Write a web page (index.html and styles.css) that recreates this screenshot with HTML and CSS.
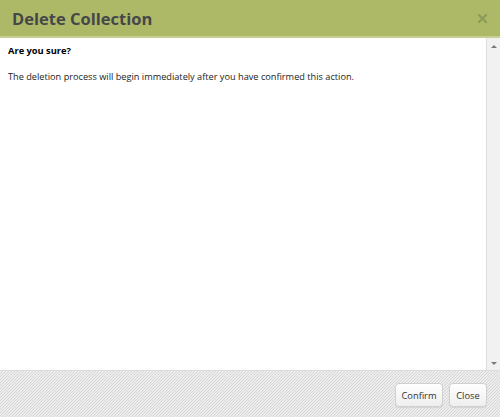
FILE: index.html
```html
<!DOCTYPE html>
<html>
<head>
<meta charset="utf-8">
<link rel="stylesheet" href="styles.css">
</head>
<body>
<div class="dialog">
  <div class="titlebar">
    <span class="title">Delete Collection</span>
    <span class="close-x" aria-label="close">
      <svg width="9" height="9" viewBox="0 0 9 9"><path d="M1 1L8 8M8 1L1 8" stroke="#8b9b5c" stroke-width="2.2" stroke-linecap="square"/></svg>
    </span>
  </div>
  <div class="content-wrap">
    <div class="content">
      <p class="question">Are you sure?</p>
      <p class="message">The deletion process will begin immediately after you have confirmed this action.</p>
    </div>
    <div class="scrollbar">
      <span class="arrow up"></span>
      <span class="arrow down"></span>
    </div>
  </div>
  <div class="buttonbar">
    <button class="btn btn-confirm">Confirm</button>
    <button class="btn btn-close">Close</button>
  </div>
</div>
</body>
</html>
```
FILE: styles.css
```css
html, body {
  margin: 0;
  padding: 0;
  width: 500px;
  height: 417px;
  overflow: hidden;
}
body {
  font-family: "Open Sans", "DejaVu Sans", sans-serif;
  color: #222;
}
.dialog {
  display: flex;
  flex-direction: column;
  width: 500px;
  height: 417px;
}
.titlebar {
  height: 36px;
  background: #adb966;
  border-bottom: 2px solid #c6cf94;
  display: flex;
  align-items: center;
  justify-content: space-between;
  padding: 0 13px 0 12px;
}
.title {
  font-size: 16.5px;
  font-weight: 700;
  color: #45474a;
}
.close-x {
  display: flex;
  align-items: center;
  margin-top: 1px;
}
.content-wrap {
  flex: 1;
  display: flex;
  min-height: 0;
  background: #fff;
}
.content {
  flex: 1;
  padding: 0 8px;
}
.question {
  margin: 6px 0 0;
  font-size: 9.3px;
  font-weight: 700;
  color: #000;
  line-height: 13px;
}
.message {
  margin: 13px 0 0;
  font-size: 9.2px;
  color: #222;
  line-height: 13px;
}
.scrollbar {
  width: 13px;
  background: #f1f1f1;
  border-left: 1px solid #dedede;
  display: flex;
  flex-direction: column;
  justify-content: space-between;
  align-items: center;
  padding: 7px 0 5px;
}
.arrow {
  width: 0;
  height: 0;
  border-left: 3px solid transparent;
  border-right: 3px solid transparent;
}
.arrow.up { border-bottom: 3px solid #7a7a7a; }
.arrow.down { border-top: 3px solid #7a7a7a; }
.buttonbar {
  height: 44px;
  border-top: 1px solid #dcdcdc;
  background-color: #ededed;
  background-image: linear-gradient(135deg, transparent 0, transparent 38%, #d6d6d6 38%, #d6d6d6 62%, transparent 62%);
  background-size: 3px 3px;
  display: flex;
  justify-content: flex-end;
  align-items: center;
  gap: 6px;
  padding: 2px 13px 0 0;
}
.btn {
  font-family: "Open Sans", "DejaVu Sans", sans-serif;
  font-size: 9.3px;
  color: #333;
  height: 24px;
  padding: 0;
  border: 1px solid #d0d0d0;
  border-radius: 4px;
  background: linear-gradient(#ffffff, #eeeeee);
  box-shadow: 0 1px 1px rgba(0,0,0,0.08);
}
.btn-confirm { width: 48px; }
.btn-close { width: 38px; }
```
